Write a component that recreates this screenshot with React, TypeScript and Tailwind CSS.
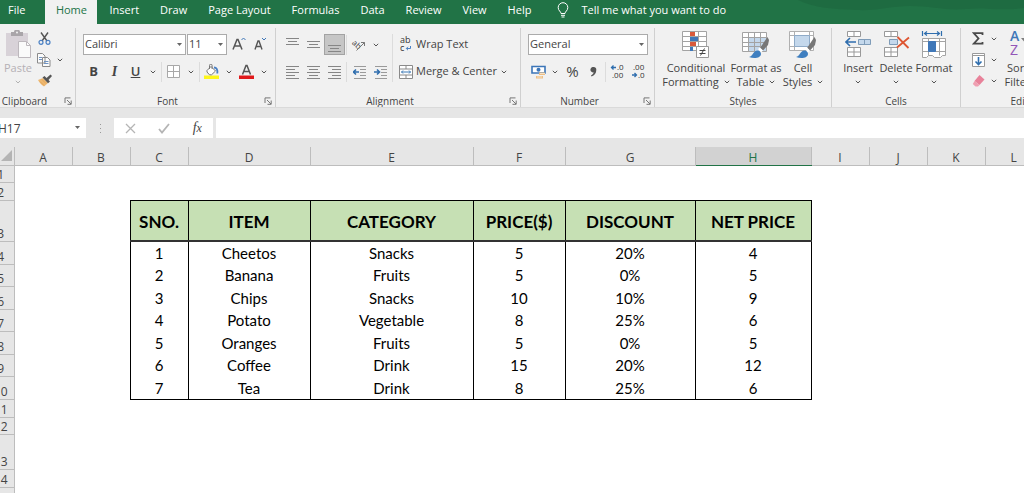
import React from 'react';
import clsx from 'clsx';

type IconProps = { className?: string };

const TABS = ['Insert', 'Draw', 'Page Layout', 'Formulas', 'Data', 'Review', 'View', 'Help'];

const COLUMNS = [
  { name: 'A', width: 'w-[58px]' },
  { name: 'B', width: 'w-[58px]' },
  { name: 'C', width: 'w-[58px]' },
  { name: 'D', width: 'w-[122px]' },
  { name: 'E', width: 'w-[163px]' },
  { name: 'F', width: 'w-[92px]' },
  { name: 'G', width: 'w-[130px]' },
  { name: 'H', width: 'w-[116px]' },
  { name: 'I', width: 'w-[58px]' },
  { name: 'J', width: 'w-[58px]' },
  { name: 'K', width: 'w-[58px]' },
  { name: 'L', width: '' },
];

const FIRST_DATA_COLUMN = 2;

const ROWS: { height: string; cells?: string[]; head?: boolean }[] = [
  { height: 'h-[17px]' },
  { height: 'h-[18px]' },
  {
    height: 'h-[41px]',
    head: true,
    cells: ['SNO.', 'ITEM', 'CATEGORY', 'PRICE($)', 'DISCOUNT', 'NET PRICE'],
  },
  { height: 'h-[23px]', cells: ['1', 'Cheetos', 'Snacks', '5', '20%', '4'] },
  { height: 'h-[22px]', cells: ['2', 'Banana', 'Fruits', '5', '0%', '5'] },
  { height: 'h-[23px]', cells: ['3', 'Chips', 'Snacks', '10', '10%', '9'] },
  { height: 'h-[22px]', cells: ['4', 'Potato', 'Vegetable', '8', '25%', '6'] },
  { height: 'h-[23px]', cells: ['5', 'Oranges', 'Fruits', '5', '0%', '5'] },
  { height: 'h-[22px]', cells: ['6', 'Coffee', 'Drink', '15', '20%', '12'] },
  { height: 'h-[23px]', cells: ['7', 'Tea', 'Drink', '8', '25%', '6'] },
  { height: 'h-[18px]' },
  { height: 'h-[17px]' },
  { height: 'h-[35px]' },
  { height: 'h-[18px]' },
  { height: 'h-[18px]' },
];

/* ---------- icons ---------- */

const Chevron: React.FC<IconProps> = ({ className }) => (
  <svg className={clsx('shrink-0', className)} width="6" height="4" viewBox="0 0 6 4" fill="none" stroke="#555">
    <path d="M.8.8 3 3 5.200.8" />
  </svg>
);

const Caret: React.FC<IconProps> = ({ className }) => (
  <svg className={className} width="5" height="3" viewBox="0 0 5 3" fill="#666">
    <path d="M0 0h5L2.500 3z" />
  </svg>
);

const LauncherIcon = () => (
  <svg width="8" height="8" viewBox="0 0 8 8" fill="none" stroke="#777">
    <path d="M1 6V.9h5.500M3 3l4 4M7.200 3.500v3.800H3.500" />
  </svg>
);

const BulbIcon = () => (
  <svg width="12" height="16" viewBox="0 0 12 16" fill="none" stroke="#fff">
    <path d="M4 11.500c0-2-2.800-2.700-2.800-6a4.800 4.800 0 0 1 9.600 0c0 3.300-2.800 4-2.800 6zM4 13.300h4M4.500 15h3" />
  </svg>
);

const PasteIcon = () => (
  <svg width="27" height="28" viewBox="0 0 27 28">
    <path d="M1 3h22v23H1z" fill="#d8d2d8" />
    <path d="M6 2h3a3 2.500 0 0 1 6 0h3v4H6z" fill="#a9a5a9" />
    <circle cx="12" cy="2.500" r="1" fill="#f1f1f1" />
    <path d="M13.500 11.500h8l4 4v12h-12z" fill="#fafafa" stroke="#bdb8bd" />
    <path d="M21.500 11.500v4h4" fill="none" stroke="#bdb8bd" />
  </svg>
);

const CutIcon = () => (
  <svg width="13" height="13" viewBox="0 0 13 13" fill="none">
    <path d="M3 .5 9 9M10 .5 4 9" stroke="#555" strokeWidth="1.400" />
    <circle cx="3" cy="10.300" r="2" stroke="#4a80c4" strokeWidth="1.200" />
    <circle cx="10" cy="10.300" r="2" stroke="#4a80c4" strokeWidth="1.200" />
  </svg>
);

const CopyIcon = () => (
  <svg width="14" height="14" viewBox="0 0 14 14" fill="#fbfbfb" stroke="#8a8a8a">
    <path d="M.5.500h5l2.500 2.500v7H.5zM5.500 4.500h5l2.500 2.500v6.500H5.500z" />
    <path d="M2 4.500h3M2 6.500h3M7 8.500h4.500M7 10.500h4.500" stroke="#6f94c4" />
  </svg>
);

const PainterIcon = () => (
  <svg width="15" height="13" viewBox="0 0 15 13">
    <path d="m1 6 5-2 5 5-4 3.500C4.500 11 2.500 9 1 6z" fill="#eeb871" />
    <path d="m3 7.500 4 4M5 5.500l4 4" stroke="#d89a4c" strokeWidth=".6" />
    <path d="m5.500 3.500 2-1.500 5.500 5.500-2 1.800z" fill="#555" />
    <path d="m9 4.500 4.500-4L15 2l-4 4.500z" fill="#555" />
  </svg>
);

const BordersIcon = () => (
  <svg width="13" height="13" viewBox="0 0 13 13" fill="#fff" stroke="#a8a8a8">
    <path d="M.5.500h12v12H.5zM6.500.500v12M.5 6.500h12" />
  </svg>
);

const FillIcon = () => (
  <svg width="15" height="15" viewBox="0 0 15 15" fill="none">
    <path d="M0 11.500h15V15H0z" fill="#fdf61b" />
    <path d="m7 2.500 4.500 4.500-4 3.800H5.500L3 8V6.500z" fill="#fff" stroke="#777" />
    <path d="M5.500 5V1.500a1.300 1.300 0 0 1 2.600 0V5" stroke="#777" />
    <path d="M10 3.500c2.500 0 3.800 1.800 3.300 6" stroke="#4a80c4" strokeWidth="1.800" />
  </svg>
);

const AlignIcon: React.FC<{ d: string }> = ({ d }) => (
  <svg width="13" height="14" viewBox="0 0 13 14" stroke="#868686" fill="none">
    <path d={d} />
  </svg>
);

const OrientationIcon = () => (
  <svg className="overflow-visible" width="14" height="13" viewBox="0 0 14 13">
    <text x="0" y="8" fontSize="8" fill="#444" transform="rotate(42 3 6)" fontFamily="Open Sans">
      ab
    </text>
    <path d="M4.500 12.500 12.500 4.500M12.500 8V4.500H9" stroke="#777" fill="none" />
  </svg>
);

const IndentIcon: React.FC<{ right?: boolean }> = ({ right }) => (
  <svg width="14" height="14" viewBox="0 0 14 14" fill="none">
    <path d="M1 1.500h12M7 4.500h6M7 7.500h6M7 10.500h6M1 13.500h12" stroke="#9a9a9a" />
    <path d={right ? 'M0 7h5M3 4.500 5.500 7 3 9.500' : 'M6 7H1M3 4.500.5 7 3 9.500'} stroke="#2f6eae" strokeWidth="1.600" />
  </svg>
);

const WrapIcon = () => (
  <svg className="overflow-visible" width="12" height="15" viewBox="0 0 12 15" fontFamily="Open Sans" fill="#333">
    <text x="0" y="6" fontSize="9">ab</text>
    <text x="0" y="14" fontSize="9">c</text>
    <path d="M10.500 9v2.500H6.500M8 9.800 6.300 11.500 8 13.200" fill="none" stroke="#4a80c4" />
  </svg>
);

const MergeIcon = () => (
  <svg width="14" height="14" viewBox="0 0 14 14" fill="#fff" stroke="#8a8a8a">
    <path d="M.5.500h13v13H.5zM.5 4h13M.5 10h13M7 .5V4M7 10v3.500" />
    <path d="M2.500 7h9M4 5.500 2.500 7 4 8.500M10 5.500 11.500 7 10 8.500" fill="none" stroke="#3b78b5" />
  </svg>
);

const CurrencyIcon = () => (
  <svg width="15" height="14" viewBox="0 0 15 14">
    <path d="M1 1.500h13v6.500H1z" fill="#fff" stroke="#3c76b8" strokeWidth="1.600" />
    <circle cx="7.500" cy="4.700" r="2" fill="#3c76b8" />
    <path d="M8 7.500h6V10H8zM5 11h7v2.500H5z" fill="#eebf85" />
    <path d="M9 8.500h5M6 12h5" stroke="#f8e2c4" />
  </svg>
);

const DecimalIcon: React.FC<{ decrease?: boolean }> = ({ decrease }) => (
  <svg className="overflow-visible" width="15" height="15" viewBox="0 0 15 15" fontFamily="Open Sans" fontSize="8" fill="#333">
    <text x={decrease ? 2 : 7} y="6">{decrease ? '.00' : '.0'}</text>
    <text x={decrease ? 7 : 2} y="14">{decrease ? '.0' : '.00'}</text>
    <path
      d={decrease ? 'M1 11h4.500M3.500 9l2 2-2 2' : 'M1.500 3.500H6M3.500 1.500l-2 2 2 2'}
      fill="none"
      stroke="#2f6eae"
      strokeWidth="1.300"
    />
  </svg>
);

const ConditionalIcon = () => (
  <svg width="28" height="28" viewBox="0 0 28 28">
    <path d="M.5.500h24v19H.5zM8.500.500v19M16.500.500v19M.5 5.500h24M.5 10.500h24M.5 15.500h24" fill="#fff" stroke="#a3a3a3" />
    <path d="M8 1h5v4H8zM8 11h6v4H8z" fill="#d9593a" />
    <path d="M8 6h8v4H8zM8 16h3v4H8z" fill="#3f77b8" />
    <path d="M14.500 15.500h12v11h-12z" fill="#fff" stroke="#999" />
    <path d="M17.500 19.500h6M17.500 22.500h6M22.500 17.500l-4 7" stroke="#444" />
  </svg>
);

const Brush = () => (
  <>
    <path d="m25.500 6 1.500 3-1 5-5 5.500-3-2.500z" fill="#777" />
    <path d="M7 26c4-.5 4-6.500 8.500-6.500 2 0 3.500 1.500 3.500 3.500 0 3.500-6 5.500-12 3z" fill="#3f7fc0" />
    <path d="m16 18 2-1.500 3 3-2 2z" fill="#fff" />
  </>
);

const FormatTableIcon = () => (
  <svg width="28" height="28" viewBox="0 0 28 28">
    <path d="M.5 1.500h24v19H.5z" fill="#fff" />
    <path d="M6.500 6h18v14.500h-18z" fill="#c4d8ec" />
    <path d="M.5 1.500h24v19H.5zM6.500 1.500v19M12.500 1.500v19M18.500 1.500v19M.5 6.500h24M.5 11.500h24M.5 15.500h24" fill="none" stroke="#a3a3a3" />
    <Brush />
  </svg>
);

const CellStylesIcon = () => (
  <svg width="28" height="28" viewBox="0 0 28 28">
    <path d="M.5.500h24v19H.5zM5.500.500v19M20.500.500v19M.5 4.500h24M.5 15.500h24" fill="#fff" stroke="#b0b0b0" />
    <path d="M5.500 4.500h15v11h-15z" fill="#c4d8ec" stroke="#8fabc8" />
    <Brush />
  </svg>
);

const InsertCellsIcon = () => (
  <svg width="27" height="28" viewBox="0 0 27 28" fill="#fff" stroke="#999">
    <path d="M2.500.500h13v5h-13zM9 .5v5M2.500 16.500h13v9h-13zM9 16.500v9M2.500 21h13" />
    <path d="M13.500 8.500h12v5h-12zM19.500 8.500v5" fill="#c4d8ec" stroke="#7f9cb8" />
    <path d="M11 11H1.500M5 7 1 11l4 4" fill="none" stroke="#2f6eae" strokeWidth="1.600" />
  </svg>
);

const DeleteCellsIcon = () => (
  <svg width="27" height="28" viewBox="0 0 27 28" fill="#fff" stroke="#999">
    <path d="M1.500.500h13v5h-13zM8 .5v5M1.500 16.500h13v9h-13zM8 16.500v9M1.500 21h13" />
    <path d="M6.500 8.500h8v5h-8z" fill="#c4d8ec" stroke="#7f9cb8" />
    <path d="m14.500 6 11 11M26 6.500l-12 10" fill="none" stroke="#de5632" strokeWidth="1.800" />
  </svg>
);

const FormatCellsIcon = () => (
  <svg width="26" height="28" viewBox="0 0 26 28" fill="#fff" stroke="#a3a3a3">
    <path d="M1.500 7.500h23v17h-3l-2 2h-6l-2-2h-4l-2 2h-4z" />
    <path d="M7.500 7.500v17M18.500 7.500v17M1.500 10.500h23M1.500 20.500h23" />
    <path d="M7.500 10.500h7v10h-7z" fill="#3f77b8" stroke="#3f77b8" />
    <path d="M1.500 0v5M20.500 0v5M4 2.500h14M6 .5l-2.500 2L6 4.500M16 .5l2.500 2-2.500 2" fill="none" stroke="#2f6eae" strokeWidth="1.200" />
  </svg>
);

const SumIcon = () => (
  <svg width="12" height="13" viewBox="0 0 12 13" fill="none" stroke="#4a4a4a" strokeWidth="1.800">
    <path d="M10.500 3V1.200H1.800L6.500 6.500l-4.700 5.200h8.700V10" />
  </svg>
);

const FillDownIcon = () => (
  <svg width="13" height="14" viewBox="0 0 13 14" fill="#fff" stroke="#999">
    <path d="M.5.500h12v13H.5zM.5 2.500h12" />
    <path d="M6.500 4v7.500M3.500 8.500l3 3 3-3" fill="none" stroke="#2f6eae" strokeWidth="1.600" />
  </svg>
);

const ClearIcon = () => (
  <svg width="13" height="13" viewBox="0 0 13 13">
    <path d="m7.500 1 5 4.500-5 5.500-5-4z" fill="#e8829a" />
    <path d="m2.500 7 5 4-1.500 1.500H3.500L.8 10z" fill="#ef9fb1" />
  </svg>
);

const SortFilterIcon = () => (
  <svg className="overflow-visible" width="28" height="28" viewBox="0 0 28 28" fontFamily="Open Sans" fontSize="14">
    <text x="1" y="10" fill="#3f77b8" fontWeight="600">A</text>
    <text x="1" y="24" fill="#9356b8">Z</text>
    <path d="M12 7h15l-6 7v9l-3-2v-7z" fill="#7f7f7f" />
  </svg>
);

/* ---------- ribbon pieces ---------- */

const IconButton: React.FC<{ label: string; active?: boolean; className?: string; children: React.ReactNode }> = ({
  label,
  active,
  className,
  children,
}) => (
  <button
    type="button"
    aria-label={label}
    className={clsx(
      'flex h-[21px] shrink-0 items-center justify-center',
      active && 'border border-[#a3a3a3] bg-[#c6c6c6]',
      className ?? 'w-[21px]',
    )}
  >
    {children}
  </button>
);

const Drop: React.FC<{ label: string; className?: string }> = ({ label, className }) => (
  <IconButton label={label} className={className ?? 'w-[14px]'}>
    <Chevron />
  </IconButton>
);

const Divider = () => <span className="mx-px h-5 w-px shrink-0 bg-[#dcdcdc]" />;

const Group: React.FC<{ name: string; className: string; launcher?: boolean; children: React.ReactNode }> = ({
  name,
  className,
  launcher,
  children,
}) => (
  <section aria-label={name} className={clsx('flex shrink-0 flex-col justify-between border-r border-[#d0d0d0]', className)}>
    {children}
    <div className="flex h-3 items-center">
      <span className="flex-1 text-center text-[10px] leading-3 text-[#444]">{name}</span>
      {launcher && (
        <button type="button" aria-label={`${name} settings`} className="flex w-4 justify-end pr-[3px]">
          <LauncherIcon />
        </button>
      )}
    </div>
  </section>
);

const BigButton: React.FC<{ icon: React.ReactNode; lines: string[]; className: string }> = ({ icon, lines, className }) => (
  <button type="button" className={clsx('flex shrink-0 flex-col items-center leading-[14px] whitespace-nowrap', className)}>
    <span className="mb-[2px] h-7">{icon}</span>
    <span>{lines[0]}</span>
    <span className="flex h-[14px] items-center gap-[5px]">
      {lines[1] && <span>{lines[1]}</span>}
      <Chevron />
    </span>
  </button>
);

const Picker: React.FC<{ label: string; value: string; className: string }> = ({ label, value, className }) => (
  <div className={clsx('relative h-[21px] shrink-0', className)}>
    <select
      aria-label={label}
      className="block h-full w-full appearance-none border border-[#ababab] bg-white pl-px text-[11px] text-[#444]"
    >
      <option>{value}</option>
    </select>
    <Caret className="pointer-events-none absolute top-[9px] right-1" />
  </div>
);

const Ribbon = () => (
  <div className="flex h-[84px] overflow-hidden border-b border-[#dadada] bg-[#f1f1f1] pt-1 text-[11px] text-[#444]">
    <Group name="Clipboard" className="-ml-[10px] w-[86px]" launcher>
      <div className="flex pl-[10px]">
        <button type="button" className="flex w-8 flex-col items-center pt-[2px] pl-1 leading-[14px] text-[#b5b0b5]">
          <PasteIcon />
          <span className="pt-[3px]">Paste</span>
          <Chevron className="mt-[5px] opacity-40" />
        </button>
        <div className="flex flex-col pl-1">
          <IconButton label="Cut" className="w-4"><CutIcon /></IconButton>
          <div className="flex">
            <IconButton label="Copy" className="w-4"><CopyIcon /></IconButton>
            <Drop label="Copy options" className="w-4" />
          </div>
          <IconButton label="Format Painter" className="w-4"><PainterIcon /></IconButton>
        </div>
      </div>
    </Group>

    <Group name="Font" className="w-[200px]" launcher>
      <div className="flex flex-col gap-[6px] pt-[6px] pl-[7px]">
        <div className="flex">
          <Picker label="Font" value="Calibri" className="mr-px w-[103px]" />
          <Picker label="Font size" value="11" className="mr-px w-10" />
          <IconButton label="Increase font size">
            <svg width="14" height="15" viewBox="0 0 14 15">
              <path d="m1 12.500 4-10h1l4 10M2.500 9h6" fill="none" stroke="#555" strokeWidth="1.500" />
              <path d="m9.500 3 2-2 2 2" fill="none" stroke="#3f77b8" />
            </svg>
          </IconButton>
          <IconButton label="Decrease font size">
            <svg width="14" height="15" viewBox="0 0 14 15">
              <path d="M2 12.500 5 4h1l3 8.500M3.500 9.500h4.500" fill="none" stroke="#555" strokeWidth="1.400" />
              <path d="m9 1 2 2 2-2" fill="none" stroke="#3f77b8" />
            </svg>
          </IconButton>
        </div>
        <div className="flex items-center text-[13px]">
          <IconButton label="Bold"><b>B</b></IconButton>
          <IconButton label="Italic"><i className="font-['Liberation_Serif',serif] text-sm font-bold">I</i></IconButton>
          <IconButton label="Underline"><span className="font-semibold underline">U</span></IconButton>
          <Drop label="Underline options" />
          <Divider />
          <IconButton label="Borders"><BordersIcon /></IconButton>
          <Drop label="Border options" />
          <Divider />
          <IconButton label="Fill color"><FillIcon /></IconButton>
          <Drop label="Fill color options" />
          <IconButton label="Font color">
            <svg width="15" height="15" viewBox="0 0 15 15">
              <path d="M0 11.500h15V15H0z" fill="#e0191b" />
              <path d="M3.500 10.500 7 1.500h1l3.500 9M5 7.500h5" fill="none" stroke="#555" strokeWidth="1.500" />
            </svg>
          </IconButton>
          <Drop label="Font color options" />
        </div>
      </div>
    </Group>

    <Group name="Alignment" className="w-[245px]" launcher>
      <div className="flex gap-[6px] pt-[6px] pl-[6px]">
        <div className="flex w-[111px] flex-col gap-[6px] border-r border-[#dcdcdc]">
          <div className="flex items-center">
            <IconButton label="Top align"><AlignIcon d="M0 .5h13M2 3.500h9M0 6.500h13" /></IconButton>
            <IconButton label="Middle align"><AlignIcon d="M0 3.500h13M2 6.500h9M0 9.500h13" /></IconButton>
            <IconButton label="Bottom align" active><AlignIcon d="M0 7.500h13M2 10.500h9M0 13.500h13" /></IconButton>
            <Divider />
            <IconButton label="Orientation"><OrientationIcon /></IconButton>
            <Drop label="Orientation options" />
          </div>
          <div className="flex items-center">
            <IconButton label="Align left"><AlignIcon d="M0 1.500h13M0 4.500h9M0 7.500h13M0 10.500h9M0 13.500h13" /></IconButton>
            <IconButton label="Center"><AlignIcon d="M0 1.500h13M2 4.500h9M0 7.500h13M2 10.500h9M0 13.500h13" /></IconButton>
            <IconButton label="Align right"><AlignIcon d="M0 1.500h13M4 4.500h9M0 7.500h13M4 10.500h9M0 13.500h13" /></IconButton>
            <Divider />
            <IconButton label="Decrease indent" className="ml-px w-[21px]"><IndentIcon /></IconButton>
            <IconButton label="Increase indent"><IndentIcon right /></IconButton>
          </div>
        </div>
        <div className="flex flex-col gap-[6px]">
          <button type="button" className="flex h-[21px] items-center gap-[3px]">
            <span className="flex w-[14px] justify-center"><WrapIcon /></span>
            Wrap Text
          </button>
          <div className="flex">
            <button type="button" className="flex h-[21px] items-center gap-[3px] whitespace-nowrap">
              <MergeIcon />
              Merge &amp; Center
            </button>
            <Drop label="Merge options" />
          </div>
        </div>
      </div>
    </Group>

    <Group name="Number" className="w-[134px]" launcher>
      <div className="flex flex-col gap-[6px] pt-[6px] pl-[7px]">
        <Picker label="Number format" value="General" className="w-[120px]" />
        <div className="flex items-center">
          <IconButton label="Accounting format" className="w-5"><CurrencyIcon /></IconButton>
          <Drop label="Accounting options" />
          <IconButton label="Percent style"><span className="text-[15px]">%</span></IconButton>
          <IconButton label="Comma style">
            <svg width="7" height="10" viewBox="0 0 7 10" fill="#555">
              <path d="M3.500 0a2.700 2.700 0 0 1 2.800 3C6.300 6 4.500 8.500 1.500 9.500L1 8.500c1.500-.8 2.500-1.800 2.700-3.200A2.700 2.700 0 1 1 3.500 0z" />
            </svg>
          </IconButton>
          <Divider />
          <IconButton label="Increase decimal"><DecimalIcon /></IconButton>
          <IconButton label="Decrease decimal"><DecimalIcon decrease /></IconButton>
        </div>
      </div>
    </Group>

    <Group name="Styles" className="w-[177px]">
      <div className="flex pt-[3px] pl-2">
        <BigButton icon={<ConditionalIcon />} lines={['Conditional', 'Formatting']} className="w-[66px]" />
        <BigButton icon={<FormatTableIcon />} lines={['Format as', 'Table']} className="w-[54px]" />
        <BigButton icon={<CellStylesIcon />} lines={['Cell', 'Styles']} className="w-10" />
      </div>
    </Group>

    <Group name="Cells" className="w-[129px]">
      <div className="flex pt-[3px] pl-[7px]">
        <BigButton icon={<InsertCellsIcon />} lines={['Insert']} className="w-[38px]" />
        <BigButton icon={<DeleteCellsIcon />} lines={['Delete']} className="w-[38px]" />
        <BigButton icon={<FormatCellsIcon />} lines={['Format']} className="w-[38px]" />
      </div>
    </Group>

    <Group name="Editing" className="w-[132px]">
      <div className="flex pl-2">
        <div className="flex flex-col">
          <div className="flex">
            <IconButton label="AutoSum" className="w-[18px]"><SumIcon /></IconButton>
            <Drop label="AutoSum options" />
          </div>
          <div className="flex">
            <IconButton label="Fill" className="w-[18px]"><FillDownIcon /></IconButton>
            <Drop label="Fill options" />
          </div>
          <div className="flex">
            <IconButton label="Clear" className="w-[18px]"><ClearIcon /></IconButton>
            <Drop label="Clear options" />
          </div>
        </div>
        <div className="pt-[3px]">
          <BigButton icon={<SortFilterIcon />} lines={['Sort &', 'Filter']} className="w-11" />
        </div>
      </div>
    </Group>
  </div>
);

const TabBar = () => (
  <nav className="relative flex h-6 items-stretch overflow-hidden bg-[#217346] text-[11px] leading-5 text-white">
    <svg className="absolute top-0 right-0" width="226" height="12" viewBox="0 0 226 12" fill="#1e6940">
      <path d="M0 0h226v8c-24 3-40-1-58 1-20 2-34-3-56-3-20 0-30 5-54 4C36 9 16 8 0 0z" opacity=".8" />
    </svg>
    <a href="#file" className="pl-2">File</a>
    <a href="#home" className="ml-5 w-[52px] bg-[#f1f1f1] text-center text-[#217346]">Home</a>
    <div className="flex gap-[21px] pl-3">
      {TABS.map((tab) => (
        <a key={tab} href={`#${tab.toLowerCase().replace(' ', '-')}`} className="whitespace-nowrap">
          {tab}
        </a>
      ))}
    </div>
    <button type="button" className="flex h-5 items-center gap-3 pl-[26px] leading-5">
      <BulbIcon />
      Tell me what you want to do
    </button>
  </nav>
);

const FormulaBar = () => (
  <div className="flex h-[39px] items-start bg-[#e6e6e6] pt-[10px] text-[#444]">
    <div className="relative h-5 w-[86px] shrink-0 overflow-hidden bg-white">
      <input aria-label="Name box" defaultValue="H17" className="-ml-[2px] block h-5 w-16 text-xs" />
      <Caret className="absolute top-2 right-[6px]" />
    </div>
    <span className="mx-3 flex h-5 w-1 flex-col items-center justify-center gap-[3px]">
      <span className="size-px bg-[#999]" />
      <span className="size-px bg-[#999]" />
      <span className="size-px bg-[#999]" />
    </span>
    <div className="flex h-5 w-[99px] shrink-0 items-center justify-around bg-white">
      <button type="button" aria-label="Cancel">
        <svg width="11" height="11" viewBox="0 0 11 11" stroke="#b5b5b5" strokeWidth="1.300"><path d="m1 1 9 9M10 1l-9 9" /></svg>
      </button>
      <button type="button" aria-label="Enter">
        <svg width="12" height="11" viewBox="0 0 12 11" fill="none" stroke="#b5b5b5" strokeWidth="1.800"><path d="m1 6 3 3.500L11 1" /></svg>
      </button>
      <button type="button" className="font-['Liberation_Serif',serif] text-sm leading-5 italic">
        f<span className="text-xs">x</span>
      </button>
    </div>
    <input aria-label="Formula" className="ml-[3px] h-5 min-w-0 flex-1 bg-white px-2 text-xs" />
  </div>
);

const dataCellClass = (head: boolean | undefined, index: number, row: number) =>
  clsx(
    'border-r border-black text-center',
    index === 0 && 'border-l',
    head
      ? 'border-t border-b-2 border-b-[#333] bg-[#c6e0b4] px-0 pt-[3px] pb-0 align-middle text-[17px] leading-5 font-bold'
      : 'px-0 pt-0 pb-px align-bottom text-[15px] leading-5 font-normal',
    row === 9 && 'border-b',
  );

const Sheet = () => (
  <div className="overflow-hidden bg-white">
    <table className="-ml-3 w-[calc(100%+12px)] min-w-[1055px] table-fixed border-collapse font-[Lato,sans-serif] text-black">
      <thead>
        <tr className="h-[18px] bg-[#e6e6e6]">
          <th className="w-[26px] border-r border-b border-[#bdbdbd] p-0">
            <svg className="ml-auto" width="14" height="14" viewBox="0 0 14 14" fill="#b4b4b4"><path d="M12 1v11H1z" /></svg>
          </th>
          {COLUMNS.map(({ name, width }) => (
            <th
              key={name}
              scope="col"
              className={clsx(
                "border-r border-b p-0 text-center align-bottom font-['Open_Sans',sans-serif] text-xs leading-[14px] font-normal",
                name === 'H'
                  ? 'border-r-[#bdbdbd] border-b-[#217346] bg-[#d2d2d2] text-[#217346]'
                  : 'border-[#bdbdbd] text-[#444]',
                width,
              )}
            >
              {name}
            </th>
          ))}
        </tr>
      </thead>
      <tbody>
        {ROWS.map(({ height, cells, head }, row) => (
          <tr key={row} className={height}>
            <th
              scope="row"
              className="border-r border-b border-[#bdbdbd] bg-[#e6e6e6] p-0 text-center align-bottom font-['Open_Sans',sans-serif] text-xs leading-[14px] font-normal text-[#444]"
            >
              {row + 1}
            </th>
            {cells ? (
              <>
                <td colSpan={FIRST_DATA_COLUMN} />
                {cells.map((cell, i) => (
                  <td key={i} className={dataCellClass(head, i, row)}>
                    {cell}
                  </td>
                ))}
                <td colSpan={4} />
              </>
            ) : (
              <td colSpan={COLUMNS.length} />
            )}
          </tr>
        ))}
      </tbody>
    </table>
  </div>
);

export default function App() {
  return (
    <main className="h-screen overflow-hidden bg-white font-['Open_Sans',sans-serif]">
      <TabBar />
      <Ribbon />
      <FormulaBar />
      <Sheet />
    </main>
  );
}
